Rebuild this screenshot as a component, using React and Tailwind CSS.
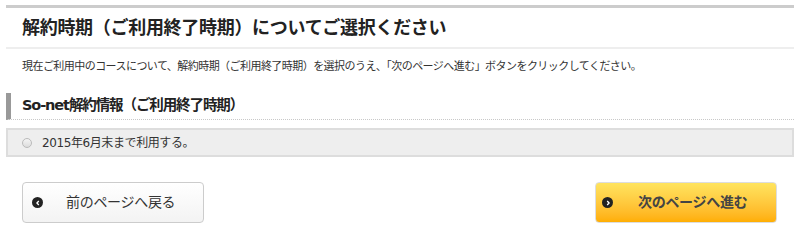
import { useState } from 'react';

const font = { fontFamily: '"DejaVu Sans", "Noto Sans CJK JP", sans-serif' };

function Chevron({ dir }) {
  return (
    <span className="flex h-[11px] w-[11px] shrink-0 items-center justify-center rounded-full bg-[#222]">
      <svg width="6" height="6" viewBox="0 0 6 6">
        {dir === 'left' ? (
          <path d="M3.8 1 L1.9 3 L3.8 5" fill="none" stroke="#fff" strokeWidth="1.3" />
        ) : (
          <path d="M2.2 1 L4.1 3 L2.2 5" fill="none" stroke="#fff" strokeWidth="1.3" />
        )}
      </svg>
    </span>
  );
}

export default function App() {
  const [checked, setChecked] = useState(false);

  return (
    <div className="h-[232px] w-[800px] bg-white px-[6px] pt-[5px] text-[#222]" style={font}>
      <div className="border-t-[3px] border-[#cccccc]">
        <h1 className="flex h-[41px] items-center border-b-2 border-[#eeeeee] pl-4 text-[18px] font-bold tracking-[-0.3px]">
          解約時期（ご利用終了時期）についてご選択ください
        </h1>
        <p className="mt-[10px] pl-4 text-[11px] leading-4 tracking-[-0.55px] text-[#333]">
          現在ご利用中のコースについて、解約時期（ご利用終了時期）を選択のうえ、「次のページへ進む」ボタンをクリックしてください。
        </p>

        <h2
          className="mt-[18px] flex h-[27px] items-center border-b border-l-[5px] border-dotted border-[#c8c8c8] pl-[11px] text-[14.5px] font-bold tracking-[-1.1px]"
          style={{ borderLeftStyle: 'solid', borderLeftColor: '#999' }}
        >
          So-net解約情報（ご利用終了時期）
        </h2>

        <label
          className="mt-[8px] flex h-[29px] cursor-pointer items-center border-2 border-[#dddddd] bg-[#eeeeee] pl-[14px] text-[12px] text-[#333]"
          onClick={() => setChecked(true)}
        >
          <span className="flex h-[10px] w-[10px] items-center justify-center rounded-full border border-[#bbbbbb] bg-gradient-to-b from-[#f4f4f4] to-[#dcdcdc]">
            {checked && <span className="h-[4px] w-[4px] rounded-full bg-[#444]" />}
          </span>
          <span className="ml-[10px] tracking-[-0.4px]">2015年6月末まで利用する。</span>
        </label>

        <div className="mt-[25px] flex justify-between pl-4 pr-[17px]">
          <button className="flex h-[41px] w-[182px] items-center rounded-[4px] border border-[#cccccc] bg-gradient-to-b from-white to-[#f3f3f3] pl-[9px] text-[14px] text-[#333]">
            <Chevron dir="left" />
            <span className="ml-[23px] tracking-[-0.3px]">前のページへ戻る</span>
          </button>
          <button className="flex h-[41px] w-[182px] items-center rounded-[4px] border border-[#dddddd] bg-gradient-to-b from-[#ffe45e] to-[#ffae00] pl-[6px] text-[14px] font-bold text-[#444]">
            <Chevron dir="right" />
            <span className="ml-[25px] tracking-[-0.3px]">次のページへ進む</span>
          </button>
        </div>
      </div>
    </div>
  );
}
